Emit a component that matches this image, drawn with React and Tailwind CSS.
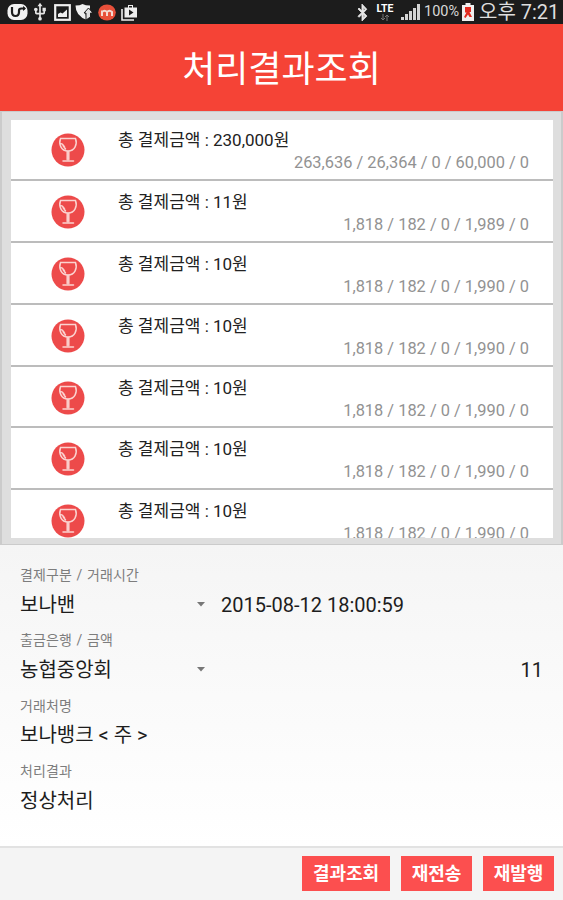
import { FaBluetoothB } from "react-icons/fa";
import { MdUsb } from "react-icons/md";

const payments = [
  { total: "230,000", detail: "263,636 / 26,364 / 0 / 60,000 / 0" },
  { total: "11", detail: "1,818 / 182 / 0 / 1,989 / 0" },
  { total: "10", detail: "1,818 / 182 / 0 / 1,990 / 0" },
  { total: "10", detail: "1,818 / 182 / 0 / 1,990 / 0" },
  { total: "10", detail: "1,818 / 182 / 0 / 1,990 / 0" },
  { total: "10", detail: "1,818 / 182 / 0 / 1,990 / 0" },
  { total: "10", detail: "1,818 / 182 / 0 / 1,990 / 0" },
];

function StatusBar() {
  return (
    <div className="flex h-6 shrink-0 items-center bg-[#1c1c1c] text-white">
      <div className="flex items-center pl-[7px]">
        <svg width="21" height="18" viewBox="0 0 21 18" fill="none">
          <rect x="0.5" y="1" width="20" height="16" rx="6.5" fill="#f2f2f2" />
          <path d="M5 4v5q0 4 3.5 4t3.5-4V7.5q0-2 2.5-2H18" stroke="#1c1c1c" strokeWidth="2.2" />
          <path d="M16 3l3 2.5-3 2.5z" fill="#1c1c1c" />
        </svg>
        <MdUsb className="ml-[2px] size-5 text-[#e6e6e6]" />
        <svg className="ml-[4px]" width="17" height="17" viewBox="0 0 17 17">
          <rect x="1.2" y="1.2" width="14.6" height="14.6" fill="none" stroke="#f0f0f0" strokeWidth="2.2" />
          <path d="M4 13v-3l2.5-1.5 2 1L13 5.5V13z" fill="#f0f0f0" />
        </svg>
        <svg className="ml-[4px]" width="18" height="18" viewBox="0 0 18 18">
          <path d="M0.500 2.500q4.500 0 7-1.500 3 1.500 7.500 1.500v5L10 9l2 8Q0.500 13 0.500 2.500z" fill="#f0f0f0" />
          <path d="M11 15V10H9L13.500 5 18 10h-2.500v4L11 17z" fill="#e0e0e0" stroke="#1c1c1c" />
        </svg>
        <svg className="ml-[5px]" width="18" height="17" viewBox="0 0 18 17">
          <ellipse cx="9" cy="8.500" rx="8.800" ry="8" fill="#e8503a" />
          <path d="M4 12V6.500M4 8q2.500-2.500 5 0v4M9 8q2.500-2.500 5 0v4" fill="none" stroke="#f3d9d2" strokeWidth="2" />
        </svg>
        <svg className="ml-[5px]" width="17" height="17" viewBox="0 0 17 17">
          <path d="M1 5v11h12" fill="none" stroke="#eee" strokeWidth="1.600" />
          <path d="M3.500 3.500h3.500V1h5v2.500H16v10H3.500z" fill="#eee" />
          <path d="M8 3.500V2h3v1.500zM8 5.500l4.500 3L8 11.500z" fill="#1c1c1c" />
        </svg>
      </div>
      <div className="ml-auto flex items-center pr-[6px]">
        <FaBluetoothB className="h-[17px] w-[15px] text-[#e6e6e6]" stroke="currentColor" strokeWidth="24" />
        <div className="ml-[5px] flex w-[20px] flex-col items-center">
          <span className="text-[10.500px] leading-[11px] font-bold">LTE</span>
          <svg width="10" height="7" viewBox="0 0 10 7" fill="none" stroke="#777">
            <path d="M3 0v6M1 4l2 2 2-2M7 7V1M5 3l2-2 2 2" />
          </svg>
        </div>
        <svg className="ml-[6px]" width="19" height="18" viewBox="0 0 19 18" fill="#d4d4d4">
          <path d="M0 17v-3h3v3zM4 17v-6h3v6zM8 17V8h3v9zM12 17V5h3v12zM16 17V1h3v16z" />
        </svg>
        <span className="ml-[4px] w-[37px] pt-px text-[14.500px] leading-none whitespace-nowrap text-[#d8d8d8]">100%</span>
        <svg className="ml-[1px]" width="12" height="18" viewBox="0 0 12 18">
          <path d="M0 2h3.500V0h5v2H12v16H0z" fill="#f0f0f0" />
          <path d="M3 4h6v5H7.500L10 14H7.500L6 11.500 3.500 15 2 14l2.500-4.500H3z" fill="#e22b20" />
        </svg>
        <span className="ml-[5px] w-[78px] pt-px text-[20px] leading-[23px] whitespace-nowrap text-[#dedede]">오후 7:21</span>
      </div>
    </div>
  );
}

function WineIcon() {
  return (
    <svg width="34" height="34" viewBox="0 0 34 34" fill="none" className="shrink-0">
      <circle cx="17" cy="17" r="16.500" fill="#ed4a4a" />
      <g stroke="#fbd3d0" strokeWidth="1.500" strokeLinecap="round">
        <path d="M9.500 5.500h15c2 5.500-.5 12.500-7.500 12.500S7.500 11 9.500 5.500z" />
        <path d="M9.500 10.500c2.500 0 2.500 1 4 3.500M12 12.500l2.500 3.500" />
        <path d="M16.200 18.500v8M17.800 18.500v8M12 28h10.500" />
      </g>
    </svg>
  );
}

function PaymentRow({ total, detail }) {
  return (
    <div className="flex h-[61.900px] shrink-0 items-start border-b-2 border-[#bcbcbc] bg-white pl-[40px]">
      <div className="pt-[14px]">
        <WineIcon />
      </div>
      <div className="flex-1 pt-[9px] pr-6 pl-[33px]">
        <div className="text-[17px] leading-6 text-[#222]">총 결제금액 : {total}원</div>
        <div className="text-right text-[16.400px] leading-[22px] text-[#929292]">{detail}</div>
      </div>
    </div>
  );
}

const Label = ({ children }) => (
  <div className="text-[14px] leading-5 tracking-[0.1px] text-[#7d7d7d] [word-spacing:1px]">{children}</div>
);

const Caret = () => (
  <svg width="8" height="5" viewBox="0 0 8 5" className="mr-4 ml-auto">
    <path d="M0 0h8L4 4.500z" fill="#777" />
  </svg>
);

export default function App() {
  return (
    <div className="flex h-[900px] w-[563px] flex-col overflow-hidden bg-white font-['Roboto','Noto_Sans_CJK_KR',sans-serif]">
      <StatusBar />
      <header className="flex h-[87px] shrink-0 items-center justify-center bg-[#f54336] pt-1">
        <h1 className="text-[36px] leading-none text-white">처리결과조회</h1>
      </header>

      <div className="h-[434px] shrink-0 border-x-2 border-t border-b border-[#cbcbcb] bg-[#dedede] pt-2 pr-2 pb-[6px] pl-[9px]">
        <div className="flex h-full flex-col overflow-hidden bg-white">
          <div className="-mt-px flex flex-col">
            {payments.map((p, i) => (
              <PaymentRow key={i} {...p} />
            ))}
          </div>
        </div>
      </div>

      {/* Detail */}
      <div className="h-[301px] shrink-0 bg-linear-to-b from-[#f5f5f5] to-white px-5 pt-5 text-[20px] text-[#1d1d1d]">
        <Label>결제구분 / 거래시간</Label>
        <div className="mb-[6.400px] flex h-[39px] items-center">
          <div className="flex w-[201px] items-center">보나밴<Caret /></div>
          <span>2015-08-12 18:00:59</span>
        </div>
        <Label>출금은행 / 금액</Label>
        <div className="mb-[6.400px] flex h-[39px] items-center">
          <div className="flex w-[201px] items-center">농협중앙회<Caret /></div>
          <span className="ml-auto">11</span>
        </div>
        <Label>거래처명</Label>
        <div className="mb-[6.400px] flex h-[39px] items-center">보나뱅크 &lt; 주 &gt;</div>
        <Label>처리결과</Label>
        <div className="flex h-[39px] items-center">정상처리</div>
      </div>

      <footer className="flex h-[54px] shrink-0 items-center justify-end gap-[11px] border-t-2 border-[#e2e2e2] bg-[#f4f4f4] pr-[9px] pb-px text-[18px] font-bold text-white">
        <button className="h-[35px] w-[88px] bg-[#fc4f4f]">결과조회</button>
        <button className="h-[35px] w-[71px] bg-[#fc4f4f]">재전송</button>
        <button className="h-[35px] w-[71px] bg-[#fc4f4f]">재발행</button>
      </footer>
    </div>
  );
}
